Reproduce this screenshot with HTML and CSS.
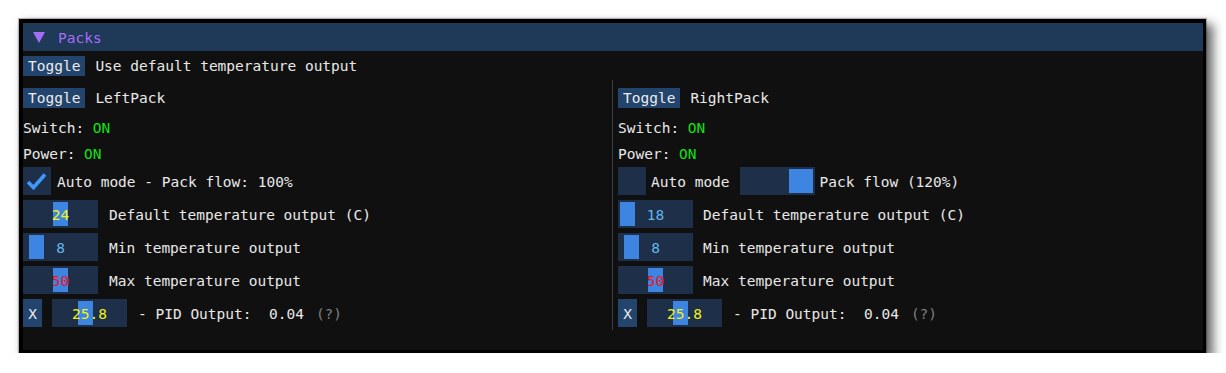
FILE: index.html
```html
<!DOCTYPE html>
<html>
<head>
<meta charset="utf-8">
<link rel="stylesheet" href="styles.css">
</head>
<body>
<div class="panel">
  <div class="header">
    <span class="tri"></span>
    <span class="title">Packs</span>
  </div>
  <div class="row r1">
    <span class="btn">Toggle</span>
    <span class="lbl l10">Use default temperature output</span>
  </div>
  <div class="cols">
    <div class="col left">
      <div class="row rt">
        <span class="btn">Toggle</span>
        <span class="lbl l10">LeftPack</span>
      </div>
      <div class="row rs"><span class="lbl">Switch: <span class="on">ON</span></span></div>
      <div class="row rp"><span class="lbl">Power: <span class="on">ON</span></span></div>
      <div class="row frame-row ra">
        <span class="check">
          <svg width="28" height="28" viewBox="0 0 28 28"><polyline points="5,15 10.5,20.5 22,7.5" fill="none" stroke="#4296fa" stroke-width="3.6" stroke-linecap="butt" stroke-linejoin="miter"/></svg>
        </span>
        <span class="ftxt m6">Auto mode - Pack flow: 100%</span>
      </div>
      <div class="row frame-row rf">
        <span class="slider"><span class="grab" style="left:30px"></span><span class="val yellow">24</span></span>
        <span class="ftxt m11">Default temperature output (C)</span>
      </div>
      <div class="row frame-row rf">
        <span class="slider"><span class="grab" style="left:6px"></span><span class="val blue">8</span></span>
        <span class="ftxt m11">Min temperature output</span>
      </div>
      <div class="row frame-row rf">
        <span class="slider"><span class="grab" style="left:30px"></span><span class="val red">50</span></span>
        <span class="ftxt m11">Max temperature output</span>
      </div>
      <div class="row frame-row rf">
        <span class="xbtn">X</span>
        <span class="slider m10"><span class="grab" style="left:26px"></span><span class="val yellow">25.8</span></span>
        <span class="ftxt m11 pre">- PID Output:  0.04</span>
        <span class="ftxt help">(?)</span>
      </div>
    </div>
    <div class="sep"></div>
    <div class="col right">
      <div class="row rt">
        <span class="btn">Toggle</span>
        <span class="lbl l10">RightPack</span>
      </div>
      <div class="row rs"><span class="lbl">Switch: <span class="on">ON</span></span></div>
      <div class="row rp"><span class="lbl">Power: <span class="on">ON</span></span></div>
      <div class="row frame-row ra">
        <span class="check"></span>
        <span class="ftxt m5">Auto mode</span>
        <span class="slider m10"><span class="grab wide" style="left:49px"></span></span>
        <span class="ftxt m5">Pack flow (120%)</span>
      </div>
      <div class="row frame-row rf">
        <span class="slider"><span class="grab" style="left:2px"></span><span class="val blue">18</span></span>
        <span class="ftxt m10">Default temperature output (C)</span>
      </div>
      <div class="row frame-row rf">
        <span class="slider"><span class="grab" style="left:6px"></span><span class="val blue">8</span></span>
        <span class="ftxt m10">Min temperature output</span>
      </div>
      <div class="row frame-row rf">
        <span class="slider"><span class="grab" style="left:30px"></span><span class="val red">50</span></span>
        <span class="ftxt m10">Max temperature output</span>
      </div>
      <div class="row frame-row rf">
        <span class="xbtn">X</span>
        <span class="slider m10"><span class="grab" style="left:26px"></span><span class="val yellow">25.8</span></span>
        <span class="ftxt m11 pre">- PID Output:  0.04</span>
        <span class="ftxt help">(?)</span>
      </div>
    </div>
  </div>
</div>
</body>
</html>
```
FILE: styles.css
```css
* { box-sizing: border-box; }
html, body { margin: 0; padding: 0; background: #ffffff; }
body {
  font-family: "DejaVu Sans Mono", "Liberation Mono", monospace;
  font-size: 14.5px;
  color: #e8e8e8;
}
.panel {
  margin: 19px 0 0 19px;
  width: 1187px;
  height: 334px;
  background: #101010;
  border-style: solid;
  border-color: #000;
  border-width: 4px 3px 3px 4px;
  box-shadow: 0 0 1px 1px rgba(0, 0, 0, 0.25), 6px 6px 10px 1px rgba(0, 0, 0, 0.6);
}
.header {
  height: 28px;
  background: #1f3958;
  display: flex;
  align-items: center;
  padding-left: 10px;
}
.tri {
  width: 0; height: 0;
  border-left: 6.5px solid transparent;
  border-right: 6.5px solid transparent;
  border-top: 11px solid #a66cf6;
}
.title { margin-left: 13px; color: #a66cf6; line-height: 20px; padding-top: 1px; }
.row { display: flex; align-items: center; height: 20px; white-space: nowrap; }
.r1 { margin-top: 5px; }
.btn {
  background: #23456d;
  height: 20px;
  line-height: 20px;
  padding: 0 5px;
  color: #ececec;
}
.lbl { line-height: 20px; }
.l10 { margin-left: 10px; }
.on { color: #14e014; }
.cols { display: flex; margin-top: 4px; }
.col { height: 250px; padding-top: 8px; }
.left { width: 589px; }
.sep { width: 1px; height: 250px; background: #3c3c44; }
.right { padding-left: 5px; flex: 1; }
.rs { margin-top: 10px; }
.rp { margin-top: 6px; }
.frame-row { height: 28px; }
.ra { margin-top: 3px; }
.rf { margin-top: 5px; }
.check {
  width: 28px; height: 28px;
  background: #1d2f49;
  display: block;
}
.check svg { display: block; }
.ftxt { line-height: 20px; padding-top: 2px; }
.m5 { margin-left: 5px; }
.m6 { margin-left: 6px; }
.m10 { margin-left: 10px; }
.m11 { margin-left: 11px; }
.pre { white-space: pre; }
.help { margin-left: 12px; color: #7f7f7f; }
.slider {
  position: relative;
  width: 75px;
  height: 28px;
  background: #1d2f49;
  display: block;
  flex: none;
}
.grab {
  position: absolute;
  top: 2px;
  bottom: 2px;
  width: 15px;
  background: #3d85e0;
}
.grab.wide { width: 24px; }
.val {
  position: relative;
  display: block;
  text-align: center;
  line-height: 20px;
  padding-top: 5px;
}
.yellow { color: #f2f20c; }
.blue { color: #62b6ea; }
.red { color: #f0141e; }
.xbtn {
  width: 19px;
  height: 28px;
  background: #23456d;
  text-align: center;
  line-height: 20px;
  padding-top: 5px;
  flex: none;
  color: #ececec;
}
```
